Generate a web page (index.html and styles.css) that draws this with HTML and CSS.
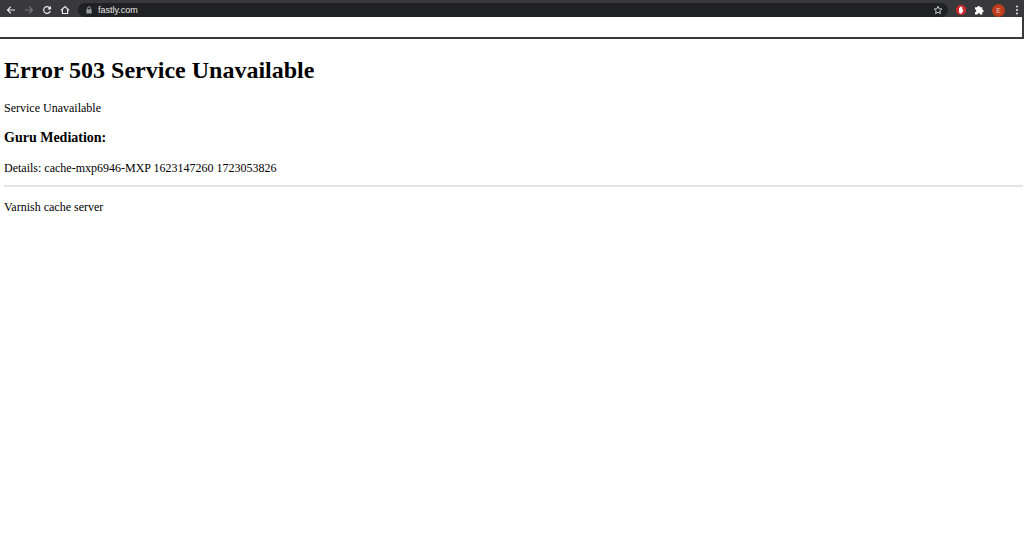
FILE: index.html
```html
<!DOCTYPE html>
<html lang="en">

<head>
    <meta charset="utf-8">
    <title>503 Service Unavailable</title>
    <link rel="stylesheet" href="styles.css">
</head>

<body>
    <header class="browser">
        <nav class="toolbar">
            <button class="tool" aria-label="Back">
                <svg viewBox="0 0 10 10"><path d="M9 5H1.5M4.8 1.7L1.5 5l3.3 3.3"/></svg>
            </button>
            <button class="tool" aria-label="Forward" disabled>
                <svg viewBox="0 0 10 10"><path d="M1 5h7.5M5.2 1.7L8.5 5 5.2 8.3"/></svg>
            </button>
            <button class="tool" aria-label="Reload">
                <svg viewBox="0 0 10 10"><path d="M7.7 2.8A3.4 3.4 0 1 0 8.3 6"/><path class="fill" d="M8.9 1v3.5H5.4z"/></svg>
            </button>
            <button class="tool" aria-label="Home">
                <svg viewBox="0 0 10 10"><path d="M1 5.3L5 1.6l4 3.7M2.4 4.8v3.7h5.2V4.8"/></svg>
            </button>
            <div class="address">
                <svg class="lock" viewBox="0 0 8 8"><path d="M2.5 3.5V2.3a1.5 1.5 0 0 1 3 0v1.2"/><rect x="1.3" y="3.2" width="5.4" height="4.3" rx=".5"/></svg>
                <input class="url" type="text" value="fastly.com" aria-label="Address">
                <button class="tool star" aria-label="Bookmark">
                    <svg viewBox="0 0 10 10"><path d="M5 1.2l1.1 2.6 2.8.2-2.1 1.9.6 2.8L5 7.2 2.6 8.7l.6-2.8L1.1 4l2.8-.2z"/></svg>
                </button>
            </div>
            <button class="tool" aria-label="Ad blocker">
                <svg viewBox="0 0 10 10"><path class="red" d="M3 0h4l3 3v4l-3 3H3L0 7V3z"/><path class="fill" d="M3 4.2V3h.7V2h.9v-.5h.8V2h.9v3l.6-.6.6.4-1.1 2.7-.8.9H3.9L3 7.3z"/></svg>
            </button>
            <button class="tool" aria-label="Extensions">
                <svg viewBox="0 0 10 10"><path class="fill" d="M1 2.3h2.3a1.4 1.4 0 0 1 2.8 0h2.2v2.4a1.3 1.3 0 0 1 0 2.6v2.2H6.1a1.3 1.3 0 0 0-2.6 0H1V7.2a1.3 1.3 0 0 0 0-2.6z"/></svg>
            </button>
            <button class="avatar" aria-label="Profile">E</button>
            <button class="tool menu" aria-label="Menu">
                <svg viewBox="0 0 8 10"><circle cx="4" cy="1.5" r="1"/><circle cx="4" cy="5" r="1"/><circle cx="4" cy="8.5" r="1"/></svg>
            </button>
        </nav>
        <div class="bookmarks"></div>
    </header>
    <main>
        <h1>Error 503 Service Unavailable</h1>
        <p>Service Unavailable</p>
        <h3>Guru Mediation:</h3>
        <p>Details: cache-mxp6946-MXP 1623147260 1723053826</p>
        <hr>
        <p>Varnish cache server</p>
    </main>
</body>

</html>
```
FILE: styles.css
```css
body {
    margin: 0;
    background-color: white;
    color: black;
    font-family: "Liberation Serif", "Times New Roman", serif;
    font-size: 12px;
    line-height: 16px;
}

.browser {
    background-color: #39393b;
    padding: 0 2px 2px 0;
}

.toolbar {
    display: flex;
    align-items: center;
    gap: 8px;
    height: 17px;
    padding: 3px 1px 0 6px;
    box-sizing: border-box;
}

button {
    border: 0;
    padding: 0;
    background: none;
    color: #e8e8e8;
}

.tool {
    display: flex;
    width: 10px;
    height: 10px;
    flex: none;
}

.tool:disabled {
    color: #79797b;
}

svg {
    width: 100%;
    height: 100%;
    fill: none;
    stroke: currentColor;
    stroke-width: 1.2;
}

.fill {
    fill: white;
    stroke: none;
}

.red {
    fill: #c9282d;
    stroke: none;
}

.address {
    display: flex;
    align-items: center;
    flex: 1;
    height: 14px;
    padding: 0 5px 0 7px;
    border-radius: 7px;
    background-color: #202125;
}

.lock {
    width: 8px;
    height: 8px;
    flex: none;
    color: #98999b;
    stroke-width: 1;
}

.lock rect {
    fill: currentColor;
    stroke: none;
}

.url {
    flex: 1;
    min-width: 0;
    border: 0;
    padding: 0 0 0 5px;
    background: none;
    color: #e8e8e8;
    font-family: "Liberation Sans", Arial, sans-serif;
    font-size: 9px;
    outline: 0;
}

.star {
    color: #c8c8ca;
}

.star svg {
    stroke-width: 1;
}

.avatar {
    width: 13px;
    height: 13px;
    flex: none;
    border-radius: 50%;
    background-color: #bd3c1c;
    color: #f0c8be;
    font-family: "Liberation Sans", Arial, sans-serif;
    font-size: 7px;
    line-height: 13px;
    text-align: center;
}

.menu {
    width: 8px;
}

.menu circle {
    fill: currentColor;
    stroke: none;
}

.bookmarks {
    height: 20px;
    background-color: white;
}

main {
    padding: 15px 1px 0 4px;
}

h1 {
    margin: 0 0 14px;
    font-size: 24px;
    line-height: 32px;
}

h3 {
    margin: 14px 0;
    font-size: 14px;
    line-height: 16px;
}

p {
    margin: 0;
}

hr {
    margin: 9px 0 12px;
    border: 0;
    height: 2px;
    background-color: #e3e3e3;
}
```
